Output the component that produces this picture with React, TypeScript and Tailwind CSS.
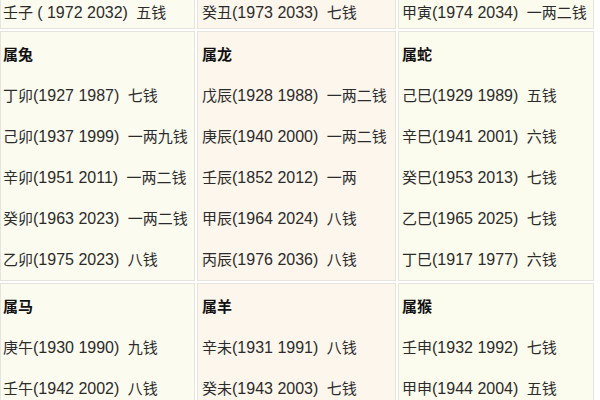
type Cell = { title?: string; rows: string[] }

const TOP: Cell[] = [
  { rows: ['壬子 ( 1972 2032)  五钱'] },
  { rows: ['癸丑(1973 2033)  七钱'] },
  { rows: ['甲寅(1974 2034)  一两二钱'] },
]

const MID: Cell[] = [
  {
    title: '属兔',
    rows: [
      '丁卯(1927 1987)  七钱',
      '己卯(1937 1999)  一两九钱',
      '辛卯(1951 2011)  一两二钱',
      '癸卯(1963 2023)  一两二钱',
      '乙卯(1975 2023)  八钱',
    ],
  },
  {
    title: '属龙',
    rows: [
      '戊辰(1928 1988)  一两二钱',
      '庚辰(1940 2000)  一两二钱',
      '壬辰(1852 2012)  一两',
      '甲辰(1964 2024)  八钱',
      '丙辰(1976 2036)  八钱',
    ],
  },
  {
    title: '属蛇',
    rows: [
      '己巳(1929 1989)  五钱',
      '辛巳(1941 2001)  六钱',
      '癸巳(1953 2013)  七钱',
      '乙巳(1965 2025)  七钱',
      '丁巳(1917 1977)  六钱',
    ],
  },
]

const BOTTOM: Cell[] = [
  { title: '属马', rows: ['庚午(1930 1990)  九钱', '壬午(1942 2002)  八钱'] },
  { title: '属羊', rows: ['辛未(1931 1991)  八钱', '癸未(1943 2003)  七钱'] },
  { title: '属猴', rows: ['壬申(1932 1992)  七钱', '甲申(1944 2004)  五钱'] },
]

// column backgrounds + left padding, as in the scanned table
const COLS = [
  'bg-[#fcfbf0] pl-[2px]',
  'bg-[#fdf6ed] pl-[4px]',
  'bg-[#fbfbee] pl-[3px]',
]

// the year part in the source is set a little larger than the hanzi
function Line({ text }: { text: string }) {
  const a = text.indexOf('(')
  const b = text.indexOf(')')
  return (
    <>
      {text.slice(0, a)}
      <span className="text-[16px]">{text.slice(a, b + 1)}</span>
      {text.slice(b + 1)}
    </>
  )
}

function TableCell({ cell, col, top }: { cell: Cell; col: number; top?: boolean }) {
  return (
    <div className={`border border-[#e6e4dc] ${COLS[col]} ${top ? 'h-[30px] -mt-px' : 'pt-[2px]'}`}>
      {cell.title && (
        <div className="h-[41px] leading-[41px] font-bold text-[#111]">{cell.title}</div>
      )}
      {cell.rows.map((r) => (
        <div
          key={r}
          className={`whitespace-pre text-[#2b2b2b] ${top ? 'leading-[26px]' : 'h-[41px] leading-[41px]'}`}
        >
          <Line text={r} />
        </div>
      ))}
    </div>
  )
}

export default function App() {
  return (
    <div
      className="h-[400px] w-[600px] overflow-hidden bg-white text-[15px]"
      style={{ fontFamily: '"Liberation Sans", "Noto Sans CJK SC", sans-serif' }}
    >
      <div className="grid grid-cols-[195px_199px_196px] gap-[2px]">
        {TOP.map((c, i) => (
          <TableCell key={i} cell={c} col={i} top />
        ))}
        {MID.map((c, i) => (
          <TableCell key={i} cell={c} col={i} />
        ))}
        {BOTTOM.map((c, i) => (
          <TableCell key={i} cell={c} col={i} />
        ))}
      </div>
    </div>
  )
}
